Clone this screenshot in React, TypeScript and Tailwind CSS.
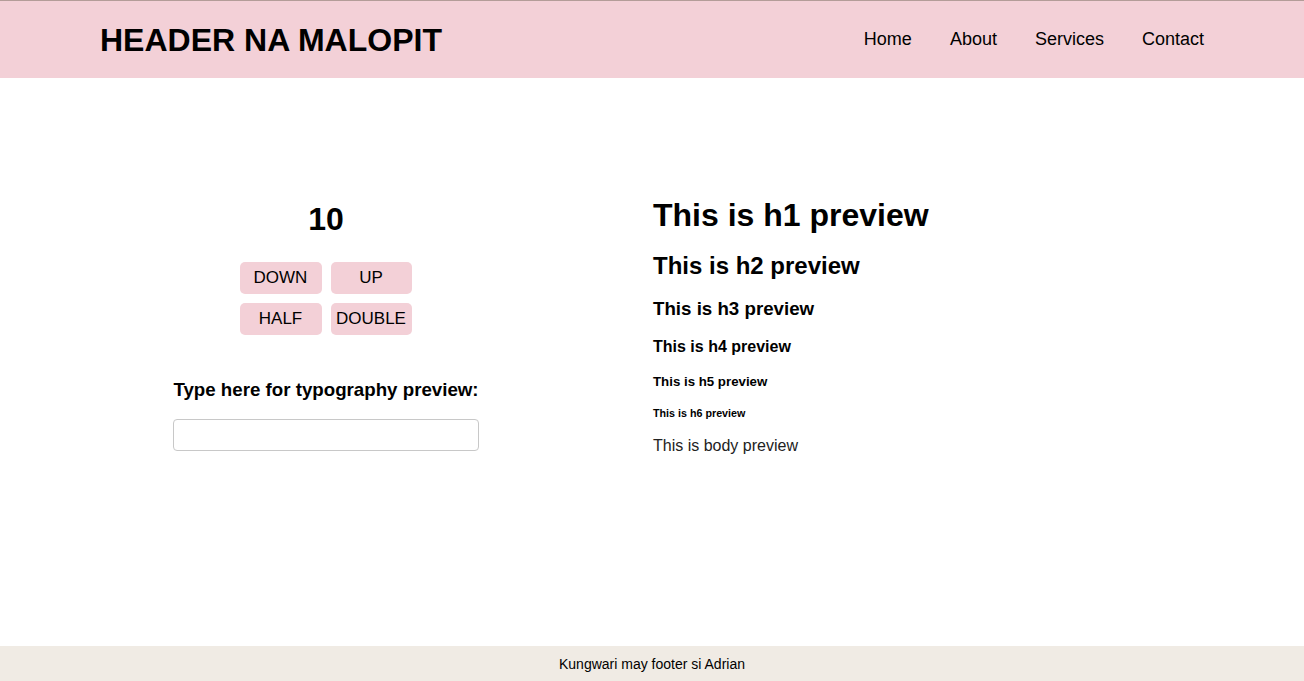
const navLinks = ['Home', 'About', 'Services', 'Contact']

export default function App() {
  return (
    <div className="flex min-h-[681px] flex-col bg-white font-['Liberation_Sans',Arial,sans-serif] text-black">
      {/* Header */}
      <header className="flex h-[78px] items-center justify-between border-t border-[#b39c98] bg-[#f3d0d7] px-[100px]">
        <h1 className="text-[32px] font-bold leading-none">HEADER NA MALOPIT</h1>
        <nav className="flex gap-[38px] text-[18px]">
          {navLinks.map((link) => (
            <a key={link} href="#" className="text-black">
              {link}
            </a>
          ))}
        </nav>
      </header>

      {/* Main */}
      <main className="grid flex-1 grid-cols-2 pt-[119px]">
        <div className="flex flex-col items-center">
          <div className="mt-[4px] text-[32px] font-bold leading-[37px]">10</div>
          <div className="mt-[24px] grid grid-cols-2 gap-[9px]">
            <button className="h-[32px] w-[82px] rounded-[5px] bg-[#f3d0d7] text-[17px]">DOWN</button>
            <button className="h-[32px] w-[81px] rounded-[5px] bg-[#f3d0d7] text-[17px]">UP</button>
            <button className="h-[32px] w-[82px] rounded-[5px] bg-[#f3d0d7] text-[17px]">HALF</button>
            <button className="h-[32px] w-[81px] rounded-[5px] bg-[#f3d0d7] text-[17px]">DOUBLE</button>
          </div>
          <label className="mt-[44px] text-[18.72px] font-bold leading-[21px]">
            Type here for typography preview:
          </label>
          <input
            type="text"
            className="mt-[19px] h-[32px] w-[306px] rounded-[4px] border border-[#c8c8c8] px-2 outline-none"
          />
        </div>

        <div className="flex flex-col items-start pl-[1px]">
          <h1 className="text-[32px] font-bold leading-[37px]">This is h1 preview</h1>
          <h2 className="mt-[18px] text-[24px] font-bold leading-[28px]">This is h2 preview</h2>
          <h3 className="mt-[18px] text-[18.72px] font-bold leading-[21px]">This is h3 preview</h3>
          <h4 className="mt-[19px] text-[16px] font-bold leading-[18px]">This is h4 preview</h4>
          <h5 className="mt-[18px] text-[13.28px] font-bold leading-[15px]">This is h5 preview</h5>
          <h6 className="mt-[18px] text-[10.72px] font-bold leading-[12px]">This is h6 preview</h6>
          <p className="mt-[18px] text-[16px] leading-[18px] text-[#222]">This is body preview</p>
        </div>
      </main>

      {/* Footer */}
      <footer className="flex h-[35px] items-center justify-center bg-[#f0ebe4] pt-[1px] text-[14px]">
        Kungwari may footer si Adrian
      </footer>
    </div>
  )
}
